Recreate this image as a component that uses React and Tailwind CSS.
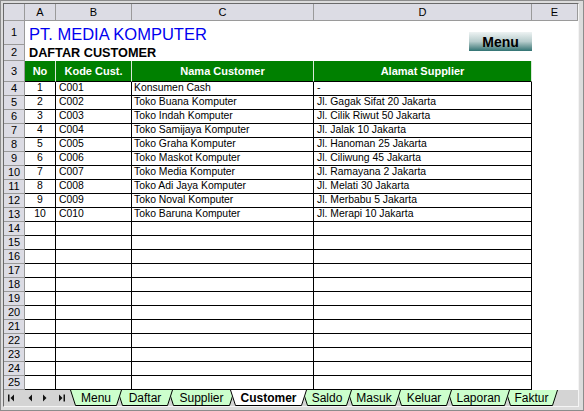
import React from 'react'

const customers = [
  ['1', 'C001', 'Konsumen Cash', '-'],
  ['2', 'C002', 'Toko Buana Komputer', 'Jl. Gagak Sifat 20 Jakarta'],
  ['3', 'C003', 'Toko Indah Komputer', 'Jl. Cilik Riwut 50 Jakarta'],
  ['4', 'C004', 'Toko Samijaya Komputer', 'Jl. Jalak 10 Jakarta'],
  ['5', 'C005', 'Toko Graha Komputer', 'Jl. Hanoman 25 Jakarta'],
  ['6', 'C006', 'Toko Maskot Komputer', 'Jl. Ciliwung 45 Jakarta'],
  ['7', 'C007', 'Toko Media Komputer', 'Jl. Ramayana 2 Jakarta'],
  ['8', 'C008', 'Toko Adi Jaya Komputer', 'Jl. Melati 30 Jakarta'],
  ['9', 'C009', 'Toko Noval Komputer', 'Jl. Merbabu 5 Jakarta'],
  ['10', 'C010', 'Toko Baruna Komputer', 'Jl. Merapi 10 Jakarta'],
]

// rows 14..25 are empty
const rows = [...customers, ...Array.from({ length: 12 }, () => ['', '', '', ''])]

const tabs = [
  { label: 'Menu', w: 52, cls: 'w-[52px] z-[10]' },
  { label: 'Daftar', w: 56, cls: 'w-[56px] z-[9]' },
  { label: 'Supplier', w: 67, cls: 'w-[67px] z-[8]' },
  { label: 'Customer', w: 77, cls: 'w-[77px] z-[20]', active: true },
  { label: 'Saldo', w: 50, cls: 'w-[50px] z-[6]' },
  { label: 'Masuk', w: 54, cls: 'w-[54px] z-[5]' },
  { label: 'Keluar', w: 56, cls: 'w-[56px] z-[4]' },
  { label: 'Laporan', w: 63, cls: 'w-[63px] z-[3]' },
  { label: 'Faktur', w: 53, cls: 'w-[53px] z-[2]' },
]

const hdr = 'flex items-center justify-center bg-[#dcdce4] border-r border-b border-[#9a9a9a] text-[11px] text-black'

function Tab({ label, w, cls, active }) {
  return (
    <div className={`relative -ml-[5px] first:ml-0 flex h-full items-center justify-center ${cls}`}>
      <svg className="absolute inset-0" width={w} height={16}>
        <polygon points={`0,0 5,15.5 ${w - 5},15.5 ${w},0`} fill={active ? '#ffffff' : '#ccffcc'} />
        <polyline
          points={`0.5,0 5.5,15.5 ${w - 5.5},15.5 ${w - 0.5},0`}
          fill="none"
          stroke="#000"
          strokeWidth="1"
        />
      </svg>
      <span className={`relative text-[12px] leading-none ${active ? 'font-bold' : ''}`}>{label}</span>
    </div>
  )
}

function Arrow({ dir, bar, cls }) {
  return (
    <svg className={cls} width="8" height="8" viewBox="0 0 8 8">
      {dir === 'left' ? (
        <>
          {bar && <rect x="0" y="0.5" width="1.5" height="7" fill="#111" />}
          <polygon points="6,0.5 2.5,4 6,7.5" fill="#111" />
        </>
      ) : (
        <>
          <polygon points="2,0.5 5.5,4 2,7.5" fill="#111" />
          {bar && <rect x="6.5" y="0.5" width="1.5" height="7" fill="#111" />}
        </>
      )}
    </svg>
  )
}

export default function App() {
  return (
    <div className="w-[584px] h-[411px] bg-[#dcdcdc] border border-[#8c8c8c] pl-[2px] pt-[2px] pr-[4px] pb-[3px] font-['Liberation_Sans',Arial,sans-serif] text-black">
      <div className="flex flex-col border border-l-[#6a6a6a] border-t-[#6a6a6a] border-r-[#f4f4f4] border-b-[#f4f4f4] bg-white">
        {/* sheet grid */}
        <div className="relative grid grid-cols-[21px_31px_76px_182px_218px_46px] grid-rows-[17px_24px_16px_21px_repeat(22,14px)]">
          <div className={hdr} />
          {['A', 'B', 'C', 'D', 'E'].map((c) => (
            <div key={c} className={hdr}>{c}</div>
          ))}

          {/* row 1 */}
          <div className={hdr}>1</div>
          <div className="col-span-5 flex items-end pl-[4px] pb-[3px] text-[16.5px] leading-none text-[#0000f0]">
            PT. MEDIA KOMPUTER
          </div>

          {/* row 2 */}
          <div className={hdr}>2</div>
          <div className="col-span-5 flex items-end pl-[4px] pb-[1px] text-[12.7px] leading-none font-bold">
            DAFTAR CUSTOMER
          </div>

          {/* row 3 – table head */}
          <div className={hdr}>3</div>
          {['No', 'Kode Cust.', 'Nama Customer', 'Alamat Supplier'].map((h) => (
            <div
              key={h}
              className="flex items-center justify-center bg-[#008000] border-r border-b border-r-[#d8e8d8] border-b-black text-[11px] font-bold text-white"
            >
              {h}
            </div>
          ))}
          <div />

          {/* rows 4..25 */}
          {rows.map((r, i) => (
            <React.Fragment key={i}>
              <div className={hdr}>{i + 4}</div>
              <div className="flex items-center justify-center border-r border-b border-black text-[10.4px] leading-none">{r[0]}</div>
              <div className="flex items-center pl-[3px] border-r border-b border-black text-[10.4px] leading-none">{r[1]}</div>
              <div className="flex items-center pl-[2px] border-r border-b border-black text-[10.4px] leading-none whitespace-nowrap">{r[2]}</div>
              <div className="flex items-center pl-[3px] border-r border-b border-black text-[10.4px] leading-none whitespace-nowrap">{r[3]}</div>
              <div />
            </React.Fragment>
          ))}

          {/* Menu button shape floating over the sheet */}
          <button className="absolute left-[465px] top-[28px] w-[63px] h-[19px] flex items-center justify-center bg-gradient-to-b from-[#eef3f3] via-[#b7cccc] to-[#2f7373] text-[14px] font-bold leading-none text-black">
            Menu
          </button>
        </div>

        {/* sheet tabs */}
        <div className="flex h-[16px] items-stretch bg-[#d4d4d4]">
          <div className="flex w-[66px] items-center">
            <Arrow dir="left" bar cls="ml-[4px]" />
            <Arrow dir="left" cls="ml-[10px]" />
            <Arrow dir="right" cls="ml-[7px]" />
            <Arrow dir="right" bar cls="ml-[8px]" />
          </div>
          <div className="flex">
            {tabs.map((t) => (
              <Tab key={t.label} {...t} />
            ))}
          </div>
        </div>
      </div>
    </div>
  )
}
